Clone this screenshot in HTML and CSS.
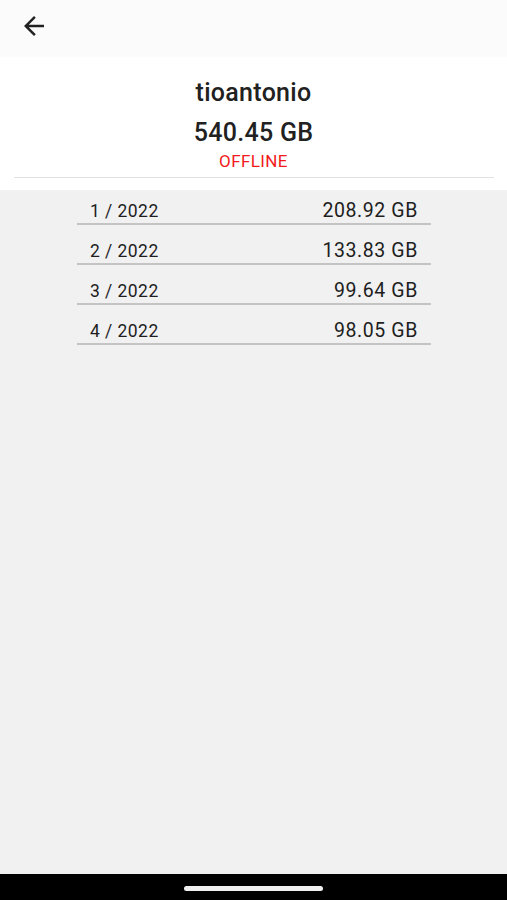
FILE: index.html
```html
<!DOCTYPE html>
<html lang="en">
<head>
<meta charset="utf-8">
<title>tioantonio</title>
<link rel="stylesheet" href="styles.css">
</head>
<body>
<div class="screen">
  <header class="appbar">
    <button class="back" aria-label="Back">
      <svg viewBox="0 0 24 24" width="30" height="30"><path d="M20 11H7.83l5.59-5.59L12 4l-8 8 8 8 1.41-1.41L7.83 13H20v-2z" fill="#212121"/></svg>
    </button>
  </header>
  <section class="profile">
    <div class="name">tioantonio</div>
    <div class="total">540.45 GB</div>
    <div class="status">OFFLINE</div>
    <div class="divider"></div>
  </section>
  <main class="content">
    <div class="list">
      <div class="row"><span class="month">1 / 2022</span><span class="usage">208.92 GB</span></div>
      <div class="row"><span class="month">2 / 2022</span><span class="usage">133.83 GB</span></div>
      <div class="row"><span class="month">3 / 2022</span><span class="usage">99.64 GB</span></div>
      <div class="row"><span class="month">4 / 2022</span><span class="usage">98.05 GB</span></div>
    </div>
  </main>
  <footer class="navbar"><div class="handle"></div></footer>
</div>
</body>
</html>
```
FILE: styles.css
```css
* { box-sizing: border-box; }
html, body { margin: 0; padding: 0; }
body {
  font-family: Roboto, "Liberation Sans", Arial, sans-serif;
  color: #212121;
  background: #f1f1f1;
}
.screen {
  width: 507px;
  height: 900px;
  display: flex;
  flex-direction: column;
}
.appbar {
  height: 57px;
  background: #fbfbfb;
  padding: 11px 0 0 19px;
  flex: none;
}
.back {
  border: 0;
  background: none;
  padding: 0;
  width: 30px;
  height: 30px;
  display: block;
}
.back svg { display: block; }
.profile {
  background: #ffffff;
  flex: none;
  height: 133px;
  padding-top: 21px;
  text-align: center;
}
.name {
  font-size: 25px;
  line-height: 30px;
  font-weight: 500;
  letter-spacing: 0.3px;
}
.total {
  margin-top: 10px;
  font-size: 25px;
  line-height: 30px;
  font-weight: 500;
  letter-spacing: 0.3px;
}
.status {
  margin-top: 3px;
  font-size: 17px;
  line-height: 20px;
  color: #f21b1b;
  letter-spacing: 0.4px;
}
.divider {
  margin: 6px 13px 0 14px;
  height: 1px;
  background: #e2e2e2;
}
.content {
  flex: 1;
  background: #f1f1f1;
}
.list {
  width: 354px;
  margin-left: 77px;
  display: flex;
  flex-direction: column;
  gap: 5px;
}
.row {
  height: 35px;
  padding: 10px 13px 0 13px;
  border-bottom: 2px solid #c4c4c4;
  display: flex;
  justify-content: space-between;
  align-items: baseline;
  color: #1e1e1e;
}
.month {
  font-size: 17.5px;
  line-height: 22px;
  letter-spacing: 0.45px;
}
.usage {
  font-size: 19.5px;
  line-height: 22px;
  letter-spacing: 0.6px;
}
.navbar {
  flex: none;
  height: 26px;
  background: #000;
  display: flex;
  justify-content: center;
  padding-top: 12px;
}
.handle {
  width: 139px;
  height: 5px;
  border-radius: 3px;
  background: #f0f0f0;
}
```
